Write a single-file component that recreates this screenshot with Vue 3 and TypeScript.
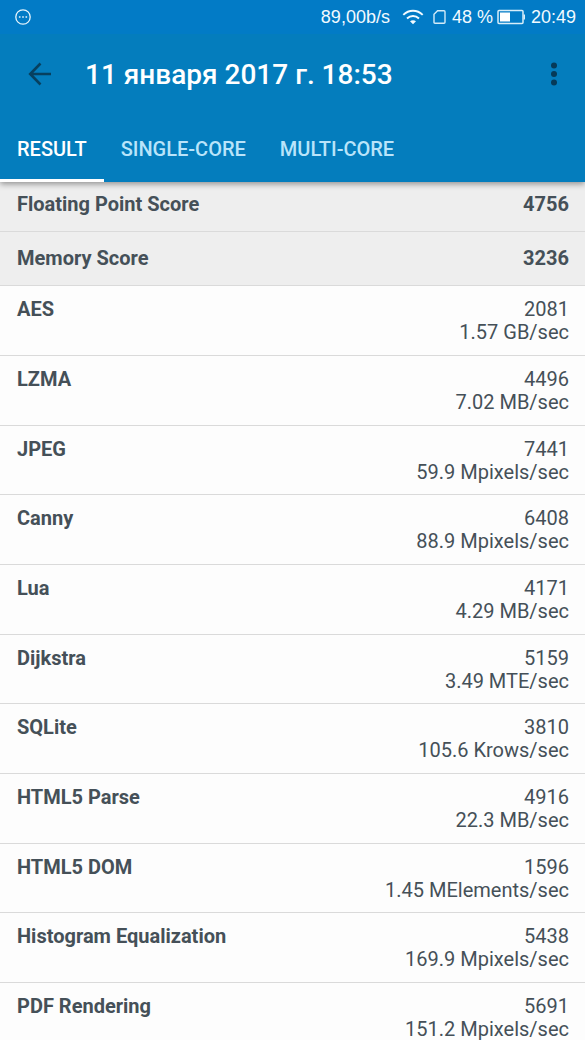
<script setup lang="ts">
import { ref } from 'vue'

interface Summary {
  name: string
  score: number
}

interface Workload extends Summary {
  rate: string
}

const tabs: string[] = ['RESULT', 'SINGLE-CORE', 'MULTI-CORE']
const activeTab = ref<string>('RESULT')

const summaries: Summary[] = [
  { name: 'Floating Point Score', score: 4756 },
  { name: 'Memory Score', score: 3236 },
]

const workloads: Workload[] = [
  { name: 'AES', score: 2081, rate: '1.57 GB/sec' },
  { name: 'LZMA', score: 4496, rate: '7.02 MB/sec' },
  { name: 'JPEG', score: 7441, rate: '59.9 Mpixels/sec' },
  { name: 'Canny', score: 6408, rate: '88.9 Mpixels/sec' },
  { name: 'Lua', score: 4171, rate: '4.29 MB/sec' },
  { name: 'Dijkstra', score: 5159, rate: '3.49 MTE/sec' },
  { name: 'SQLite', score: 3810, rate: '105.6 Krows/sec' },
  { name: 'HTML5 Parse', score: 4916, rate: '22.3 MB/sec' },
  { name: 'HTML5 DOM', score: 1596, rate: '1.45 MElements/sec' },
  { name: 'Histogram Equalization', score: 5438, rate: '169.9 Mpixels/sec' },
  { name: 'PDF Rendering', score: 5691, rate: '151.2 Mpixels/sec' },
]
</script>

<template>
  <div class="screen">
    <header class="header">
      <div class="status">
        <svg class="notice" width="18" height="18" viewBox="0 0 18 18" aria-hidden="true">
          <circle cx="9" cy="9" r="7.2" fill="none" stroke="#e6f4fc" stroke-width="1.3" />
          <path d="M4.9 8.3h1.6v1.5H4.9zM8.2 8.3h1.6v1.5H8.2zM11.5 8.3h1.6v1.5h-1.6z" fill="#e6f4fc" />
        </svg>
        <span class="speed">89,00b/s</span>
        <svg class="wifi" width="22" height="16" viewBox="0 0 22 16" aria-hidden="true">
          <g fill="none" stroke="#f2faff" stroke-width="1.9">
            <path d="M1.3 5.8C6.8 .3 15.2 .3 20.7 5.8" />
            <path d="M5 9.5C8.4 6.1 13.6 6.1 17 9.5" />
          </g>
          <path d="M8 12.2c1.8-1.4 4.2-1.4 6 0l-3 3z" fill="#f2faff" />
        </svg>
        <svg class="sim" width="13" height="16" viewBox="0 0 13 16" aria-hidden="true">
          <path d="M4.6 1.7H11q1 0 1 1v10.6q0 1-1 1H2q-1 0-1-1V5.3z" fill="none" stroke="#d3ebf8" stroke-width="1.4" />
        </svg>
        <span class="percent">48 %</span>
        <svg class="battery" width="29" height="16" viewBox="0 0 29 16" aria-hidden="true">
          <rect x="1" y="1.5" width="25" height="13" rx="1" fill="none" stroke="#d8eefa" stroke-width="1.5" />
          <path d="M3 3.5h10v9H3z" fill="#fff" />
          <path d="M26.5 5.5H28v5h-1.5z" fill="#d8eefa" />
        </svg>
        <span>20:49</span>
      </div>

      <div class="toolbar">
        <button class="icon-button" type="button" aria-label="Back">
          <svg width="24" height="24" viewBox="0 0 24 24" aria-hidden="true">
            <path d="M23 12H2.500M12.500 1.500L2.200 12L12.500 22.500" fill="none" stroke="#07405f" stroke-width="2.600" />
          </svg>
        </button>
        <h1 class="title">11 января 2017 г. 18:53</h1>
        <button class="icon-button" type="button" aria-label="More options">
          <svg width="24" height="24" viewBox="0 0 24 24" fill="#063a58" aria-hidden="true">
            <circle cx="12" cy="3.5" r="3" />
            <circle cx="12" cy="12" r="3" />
            <circle cx="12" cy="20.5" r="3" />
          </svg>
        </button>
      </div>

      <div class="tabs" role="tablist">
        <button
          v-for="tab in tabs"
          :key="tab"
          type="button"
          role="tab"
          class="tab"
          :class="{ active: tab === activeTab }"
          :aria-selected="tab === activeTab"
          @click="activeTab = tab"
        >
          {{ tab }}
        </button>
      </div>
    </header>

    <main class="content">
      <table class="results">
        <tbody class="summaries">
          <tr v-for="item in summaries" :key="item.name">
            <th scope="row">{{ item.name }}</th>
            <td>{{ item.score }}</td>
          </tr>
        </tbody>
        <tbody class="workloads">
          <tr v-for="item in workloads" :key="item.name">
            <th scope="row">{{ item.name }}</th>
            <td>
              <div>{{ item.score }}</div>
              <div>{{ item.rate }}</div>
            </td>
          </tr>
        </tbody>
      </table>
    </main>
  </div>
</template>

<style>
body {
  margin: 0;
  background: #fdfdfd;
}
</style>

<style scoped>
.screen {
  display: flex;
  flex-direction: column;
  height: 100vh;
  overflow: hidden;
  font-family: Roboto, 'Noto Sans', sans-serif;
  color: #455058;
}

.header {
  position: relative;
  z-index: 1;
  flex: none;
  background: #047dbd;
  box-shadow: 0 2px 6px rgba(0, 0, 0, 0.4);
}

.status {
  display: flex;
  align-items: center;
  height: 34px;
  padding: 0 9px 0 14px;
  background: #027bc6;
  color: #f2faff;
  font-family: 'Liberation Sans', Arial, sans-serif;
  font-size: 18px;
  white-space: nowrap;
}

.notice {
  margin-right: auto;
}

.wifi {
  margin: 0 9px 0 12px;
}

.sim {
  margin-right: 6px;
}

.percent {
  margin-right: 4px;
}

.battery {
  margin-right: 5px;
}

.toolbar {
  display: flex;
  align-items: center;
  height: 80px;
  padding: 0 19px 0 28px;
}

.icon-button {
  display: flex;
  padding: 0;
  border: 0;
  background: none;
  cursor: pointer;
}

.title {
  flex: 1;
  margin: 0 0 0 33px;
  padding-top: 2px;
  color: #fff;
  font-family: Roboto, Inter, sans-serif;
  font-size: 28px;
  font-weight: 500;
  line-height: 32px;
}

.tabs {
  display: flex;
}

.tab {
  height: 68px;
  padding: 4px 17px 0;
  border: 0;
  border-bottom: 3px solid transparent;
  background: none;
  color: #b9e4fa;
  font: 500 20px/24px Roboto, 'Noto Sans', sans-serif;
  cursor: pointer;
}

.tab.active {
  border-bottom-color: #fff;
  color: #fff;
}

.content {
  flex: 1;
  min-height: 0;
  overflow: hidden;
}

/* The list is scrolled slightly under the header. */
.results {
  width: 100%;
  margin-top: -4px;
  border-spacing: 0;
  font-size: 20px;
  line-height: 23px;
}

.results th {
  padding: 12px 0 11px 17px;
  border-bottom: 1px solid #dadada;
  font-weight: 700;
  text-align: left;
  vertical-align: top;
}

.results td {
  padding: 12px 16px 11px 0;
  border-bottom: 1px solid #dadada;
  text-align: right;
  vertical-align: top;
}

.summaries {
  background: #eee;
}

.summaries th,
.summaries td {
  padding-top: 15px;
  padding-bottom: 15px;
  font-weight: 700;
}

.workloads tr:nth-child(3n) td {
  padding-bottom: 10px;
}
</style>
